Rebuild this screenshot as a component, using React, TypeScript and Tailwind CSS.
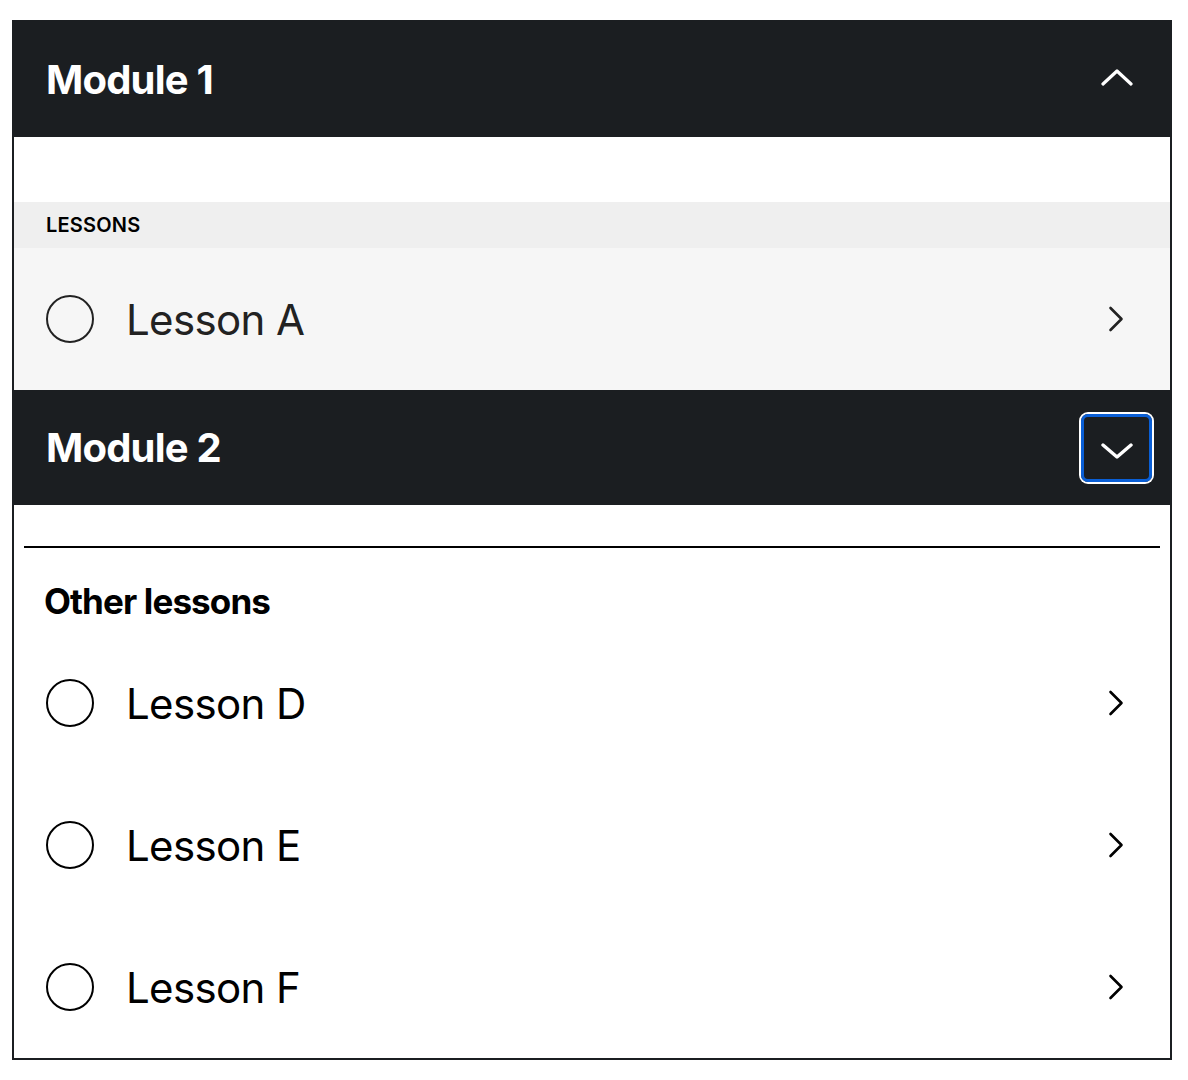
import React, { useState } from "react";

interface Lesson {
  id: string;
  title: string;
}

interface Module {
  id: number;
  title: string;
  open: boolean;
}

const font = { fontFamily: "Inter, 'Noto Sans', sans-serif" };

const ChevronUp = () => (
  <svg className="-translate-y-[3px]" width="32" height="18" viewBox="0 0 32 18" fill="none">
    <path d="M2 16 L16 3 L30 16" stroke="white" strokeWidth="3.2" strokeLinecap="round" strokeLinejoin="round" />
  </svg>
);

const ChevronDown = () => (
  <svg className="translate-y-[3px]" width="32" height="18" viewBox="0 0 32 18" fill="none">
    <path d="M2 3 L16 15 L30 3" stroke="white" strokeWidth="3.4" strokeLinecap="round" strokeLinejoin="round" />
  </svg>
);

const ChevronRight = () => (
  <svg width="16" height="26" viewBox="0 0 16 26" fill="none">
    <path d="M2.5 2 L13.5 13 L2.5 24" stroke="currentColor" strokeWidth="2.6" strokeLinecap="round" strokeLinejoin="round" />
  </svg>
);

const ModuleHeader: React.FC<{ title: string; open: boolean; focused?: boolean; onToggle: () => void }> = ({
  title,
  open,
  focused,
  onToggle,
}) => (
  <div className="flex h-[115px] items-center justify-between bg-[#1b1e21] pl-8 pr-[18px]">
    <h2 className="text-[40px] font-bold tracking-[-0.02em] text-white">{title}</h2>
    <button
      onClick={onToggle}
      className={
        focused
          ? "flex h-[68px] w-[71px] items-center justify-center rounded-[7px] border-[3px] border-[#0a5fd6] ring-2 ring-white"
          : "flex h-[68px] w-[71px] items-center justify-center rounded-[7px]"
      }
    >
      {open ? <ChevronUp /> : <ChevronDown />}
    </button>
  </div>
);

const LessonRow: React.FC<{ lesson: Lesson; muted?: boolean }> = ({ lesson, muted }) => (
  <div
    className={
      muted
        ? "flex h-[142px] items-center bg-[#f6f6f6] pl-8 pr-[46px] text-[#222222]"
        : "flex h-[142px] items-center pl-8 pr-[46px] text-black"
    }
  >
    <span className="h-12 w-12 shrink-0 rounded-full border-2 border-current" />
    <span className="ml-8 flex-1 text-[42px] font-normal tracking-[-0.015em]">{lesson.title}</span>
    <ChevronRight />
  </div>
);

export default function App() {
  const [modules, setModules] = useState<Module[]>([
    { id: 1, title: "Module 1", open: true },
    { id: 2, title: "Module 2", open: false },
  ]);

  const toggle = (id: number) =>
    setModules((prev) => prev.map((m) => (m.id === id ? { ...m, open: !m.open } : m)));

  const current: Lesson[] = [{ id: "a", title: "Lesson A" }];
  const others: Lesson[] = [
    { id: "d", title: "Lesson D" },
    { id: "e", title: "Lesson E" },
    { id: "f", title: "Lesson F" },
  ];

  return (
    <div className="bg-white pt-5 pl-3" style={font}>
      <div className="w-[1160px] border-2 border-[#1b1e21] bg-white">
        <ModuleHeader title={modules[0].title} open={modules[0].open} onToggle={() => toggle(1)} />
        <div className="h-[65px]" />
        <div className="flex h-[46px] items-center bg-[#efefef] pl-8 text-[20px] font-semibold tracking-[0.01em] text-black">
          LESSONS
        </div>
        {current.map((l) => (
          <LessonRow key={l.id} lesson={l} muted />
        ))}
        <ModuleHeader title={modules[1].title} open={modules[1].open} focused onToggle={() => toggle(2)} />
        <div className="h-[41px]" />
        <hr className="mx-[10px] border-t-2 border-black" />
        <div className="flex h-[84px] items-center pl-[30px] pt-[22px] text-[35px] font-bold tracking-[-0.025em] text-black">
          Other lessons
        </div>
        {others.map((l) => (
          <LessonRow key={l.id} lesson={l} />
        ))}
      </div>
    </div>
  );
}
